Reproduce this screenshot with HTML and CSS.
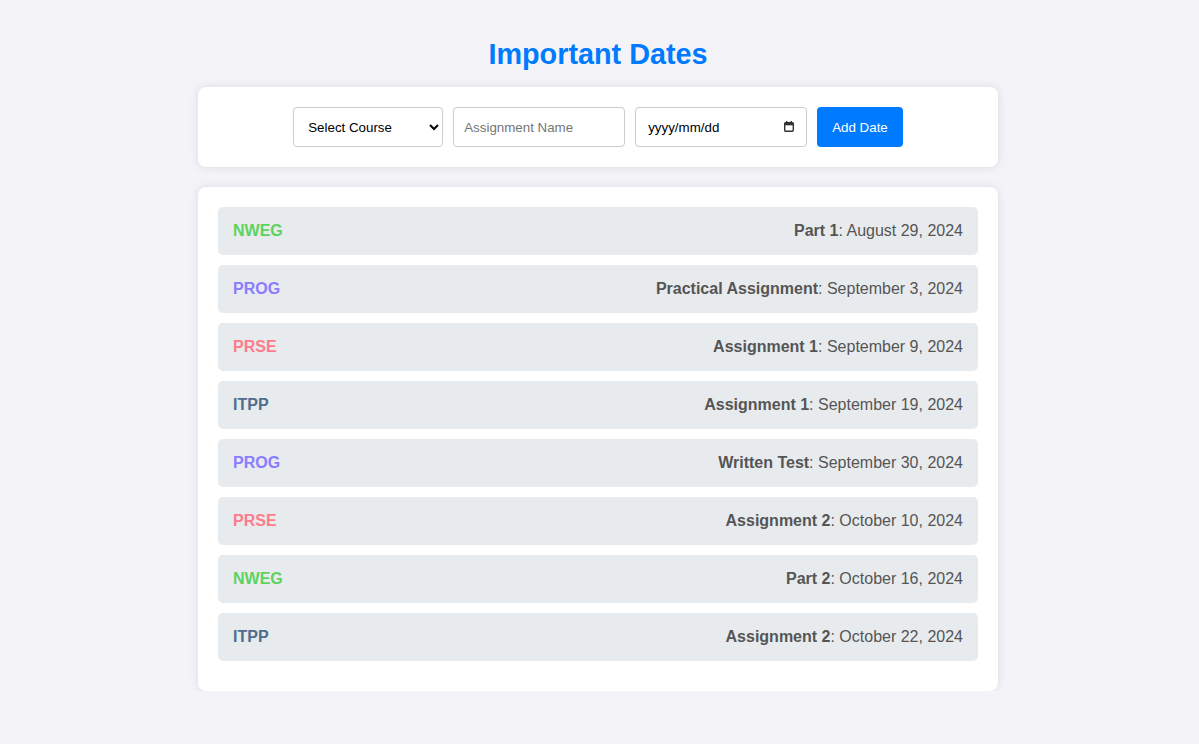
FILE: index.html
```html
<!DOCTYPE html>
<html lang="en">
<head>
<meta charset="utf-8">
<title>Important Dates</title>
<link rel="stylesheet" href="styles.css">
</head>
<body>
<div class="container">
  <h1 class="title">Important Dates</h1>
  <form class="card form-card">
    <select class="field select">
      <option>Select Course</option>
      <option>NWEG</option>
      <option>PROG</option>
      <option>PRSE</option>
      <option>ITPP</option>
    </select>
    <input class="field text" type="text" placeholder="Assignment Name">
    <label class="date-wrap">
      <input class="field date" type="text" placeholder="yyyy/mm/dd">
      <svg class="cal" width="10" height="11" viewBox="0 0 10 11" aria-hidden="true">
        <rect x="2" y="0" width="1.4" height="2" fill="#333"/>
        <rect x="6.6" y="0" width="1.4" height="2" fill="#333"/>
        <rect x="0.7" y="1.7" width="8.6" height="8.6" rx="1" fill="none" stroke="#333" stroke-width="1.4"/>
        <rect x="0.7" y="1.7" width="8.6" height="2.6" fill="#333"/>
      </svg>
    </label>
    <button class="btn" type="button">Add Date</button>
  </form>
  <div class="card list-card">
    <div class="item"><span class="course nweg">NWEG</span><span class="info"><b>Part 1</b>: August 29, 2024</span></div>
    <div class="item"><span class="course prog">PROG</span><span class="info"><b>Practical Assignment</b>: September 3, 2024</span></div>
    <div class="item"><span class="course prse">PRSE</span><span class="info"><b>Assignment 1</b>: September 9, 2024</span></div>
    <div class="item"><span class="course itpp">ITPP</span><span class="info"><b>Assignment 1</b>: September 19, 2024</span></div>
    <div class="item"><span class="course prog">PROG</span><span class="info"><b>Written Test</b>: September 30, 2024</span></div>
    <div class="item"><span class="course prse">PRSE</span><span class="info"><b>Assignment 2</b>: October 10, 2024</span></div>
    <div class="item"><span class="course nweg">NWEG</span><span class="info"><b>Part 2</b>: October 16, 2024</span></div>
    <div class="item"><span class="course itpp">ITPP</span><span class="info"><b>Assignment 2</b>: October 22, 2024</span></div>
  </div>
</div>
</body>
</html>
```
FILE: styles.css
```css
* { box-sizing: border-box; }
html, body { margin: 0; padding: 0; }
body {
  background: #f4f4f8;
  font-family: "Liberation Sans", Arial, sans-serif;
  color: #555;
  padding-right: 3px;
}
.container {
  width: 800px;
  margin: 0 auto;
  padding-top: 38px;
}
.title {
  margin: 0 0 16px;
  text-align: center;
  color: #007bff;
  font-size: 28.8px;
  font-weight: bold;
}
.card {
  background: #fff;
  border-radius: 8px;
  box-shadow: 0 0 10px rgba(0, 0, 0, 0.1);
  padding: 20px;
}
.form-card {
  display: flex;
  justify-content: center;
  gap: 10px;
  margin: 0 0 20px;
}
.field {
  height: 40px;
  padding: 10px;
  border: 1px solid #ccc;
  border-radius: 4px;
  font-family: "Liberation Sans", Arial, sans-serif;
  font-size: 13.333px;
  color: #000;
  background: #fff;
}
.select { width: 150px; }
.text { width: 172px; }
.text::placeholder { color: #757575; }
.date-wrap {
  position: relative;
  display: block;
  width: 172px;
}
.date {
  width: 100%;
  padding-left: 12px;
}
.date::placeholder { color: #000; }
.cal {
  position: absolute;
  right: 13px;
  top: 14px;
}
.btn {
  height: 40px;
  padding: 10px 15px;
  border: none;
  border-radius: 4px;
  background: #007bff;
  color: #fff;
  font-family: "Liberation Sans", Arial, sans-serif;
  font-size: 13.333px;
}
.item {
  display: flex;
  justify-content: space-between;
  align-items: center;
  background: #e8ebee;
  border-radius: 5px;
  padding: 15px;
  height: 48px;
  margin-bottom: 10px;
  font-size: 16px;
}
.course { font-weight: bold; }
.info b { font-weight: bold; }
.nweg { color: #5cd35e; }
.prog { color: #8a7cff; }
.prse { color: #ff7b8b; }
.itpp { color: #4e6d8f; }
```
